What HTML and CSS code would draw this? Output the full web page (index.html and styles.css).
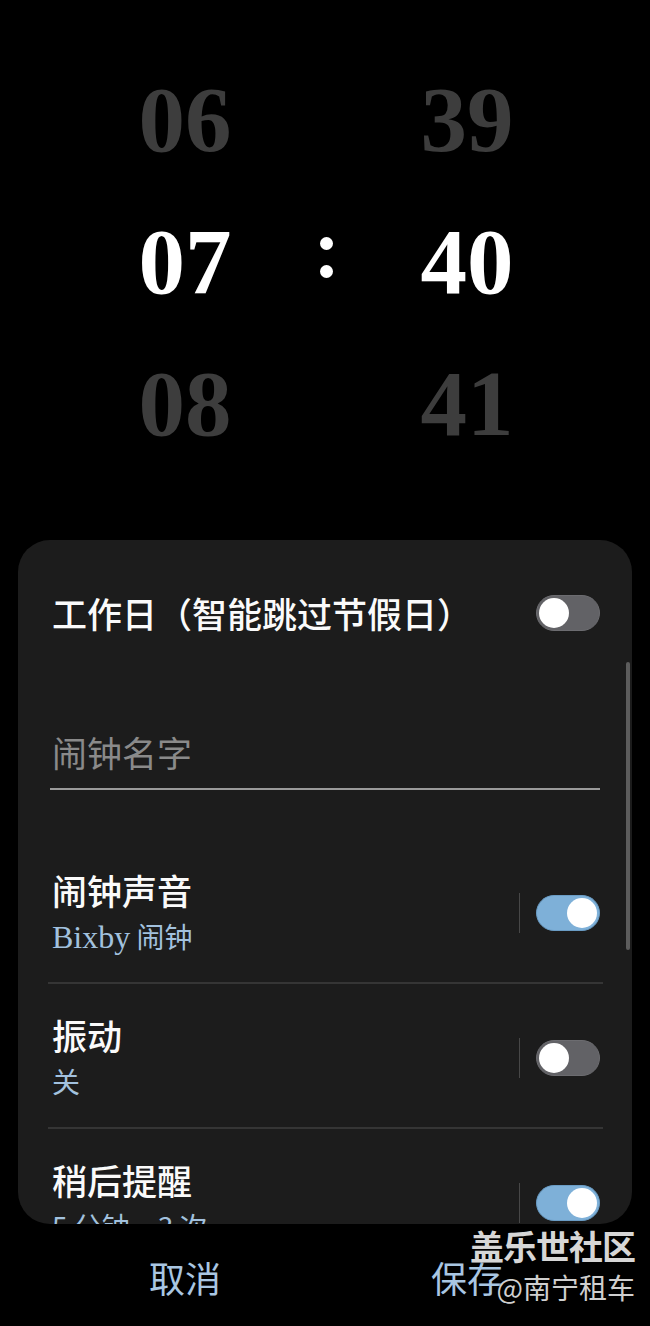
FILE: index.html
```html
<!DOCTYPE html>
<html lang="zh-CN">
<head>
<meta charset="utf-8">
<title>闹钟</title>
<link rel="stylesheet" href="styles.css">
</head>
<body>
<main class="screen">
  <section class="picker">
    <div class="picker-col">
      <div class="num dim">06</div>
      <div class="num">07</div>
      <div class="num dim">08</div>
    </div>
    <div class="picker-sep" aria-label=":">
      <span class="dot"></span>
      <span class="dot"></span>
    </div>
    <div class="picker-col">
      <div class="num dim">39</div>
      <div class="num">40</div>
      <div class="num dim">41</div>
    </div>
  </section>

  <section class="sheet">
    <div class="scrollbar"></div>

    <div class="workday">
      <span class="title">工作日（智能跳过节假日）</span>
      <span class="toggle"><span class="knob"></span></span>
    </div>

    <div class="name-field">闹钟名字</div>

    <div class="list">
      <div class="item">
        <div class="item-text">
          <div class="title">闹钟声音</div>
          <div class="sub"><span class="latin">Bixby</span> 闹钟</div>
        </div>
        <span class="vline"></span>
        <span class="toggle on"><span class="knob"></span></span>
      </div>
      <div class="item">
        <div class="item-text">
          <div class="title">振动</div>
          <div class="sub">关</div>
        </div>
        <span class="vline"></span>
        <span class="toggle"><span class="knob"></span></span>
      </div>
      <div class="item">
        <div class="item-text">
          <div class="title">稍后提醒</div>
          <div class="sub">5 分钟，3 次</div>
        </div>
        <span class="vline"></span>
        <span class="toggle on"><span class="knob"></span></span>
      </div>
    </div>
  </section>

  <footer class="actions">
    <span class="action">取消</span>
    <span class="action">保存</span>
  </footer>

  <div class="watermark">
    <span class="wm-main">盖乐世社区</span>
    <span class="wm-sub">@南宁租车</span>
  </div>
</main>
</body>
</html>
```

FILE: styles.css
```css
html, body {
  margin: 0;
  padding: 0;
  background: #000;
}

.screen {
  position: relative;
  width: 650px;
  height: 1326px;
  overflow: hidden;
  background: #000;
  font-family: "Noto Sans CJK SC", sans-serif;
}

/* ---------- time picker ---------- */
.picker {
  display: flex;
  padding: 49px 0 0 100px;
  height: 426px;
}

.picker-col {
  width: 170px;
  display: flex;
  flex-direction: column;
}

.num {
  height: 142px;
  line-height: 142px;
  text-align: center;
  font-family: "Liberation Serif", serif;
  font-weight: 700;
  font-size: 93px;
  color: #ffffff;
}

.num.dim {
  color: #3d3d3d;
}

.picker-sep {
  width: 112px;
  display: flex;
  flex-direction: column;
  align-items: center;
  justify-content: center;
  gap: 15px;
  padding-bottom: 9px;
  box-sizing: border-box;
  height: 142px;
  margin-top: 142px;
}

.dot {
  width: 13px;
  height: 13px;
  border-radius: 50%;
  background: #ffffff;
}

/* ---------- bottom sheet ---------- */
.sheet {
  position: relative;
  margin: 65px 18px 0;
  height: 684px;
  background: #1c1c1c;
  border-radius: 32px;
  overflow: hidden;
}

.scrollbar {
  position: absolute;
  top: 122px;
  right: 2px;
  width: 4px;
  height: 288px;
  border-radius: 2px;
  background: #5c5c5c;
}

.title {
  font-size: 35px;
  line-height: 46px;
  height: 46px;
  font-weight: 500;
  color: #fafafa;
  white-space: nowrap;
}

.workday {
  margin-top: 35px;
  height: 75px;
  padding: 0 32px 0 34px;
  display: flex;
  align-items: center;
  justify-content: space-between;
}

.name-field {
  margin: 77px 32px 0;
  padding: 0 0 11px 2px;
  height: 50px;
  line-height: 50px;
  font-size: 35px;
  color: #8a8a8a;
  border-bottom: 2px solid #9a9a9a;
}

.list {
  margin-top: 49px;
}

.item {
  display: flex;
  align-items: center;
  margin: 0 29px 0 30px;
  padding: 28px 3px 23px 4px;
  border-bottom: 2px solid #353535;
}

.item-text {
  flex: 1;
  display: flex;
  flex-direction: column;
}

.sub {
  font-size: 28px;
  line-height: 46px;
  height: 46px;
  color: #a2c1de;
  white-space: nowrap;
}

.sub .latin {
  font-family: "Liberation Serif", serif;
  font-size: 32px;
}

.vline {
  width: 1px;
  height: 40px;
  background: #474747;
  margin-right: 16px;
}

/* ---------- toggle ---------- */
.toggle {
  position: relative;
  width: 64px;
  height: 36px;
  border-radius: 18px;
  background: #626266;
  box-sizing: border-box;
  border: 1px solid #6c6c70;
  flex: none;
}

.toggle .knob {
  position: absolute;
  top: 2px;
  left: 2px;
  width: 30px;
  height: 30px;
  border-radius: 50%;
  background: #ffffff;
}

.toggle.on {
  background: #7eb0d8;
  border-color: #6a9cc4;
}

.toggle.on .knob {
  left: auto;
  right: 2px;
}

/* ---------- actions ---------- */
.actions {
  display: flex;
  padding: 28px 0 0 100px;
  gap: 112px;
}

.action {
  width: 170px;
  text-align: center;
  font-size: 36px;
  line-height: 50px;
  height: 50px;
  color: #a9c6e2;
}

/* ---------- watermark ---------- */
.watermark {
  position: absolute;
  right: 15px;
  top: 1224px;
  display: flex;
  flex-direction: column;
  align-items: flex-end;
  color: #d6d6d6;
  text-shadow: 0 0 2px rgba(0, 0, 0, 0.6);
}

.wm-main {
  font-size: 34px;
  line-height: 44px;
  font-weight: 700;
  letter-spacing: -1px;
}

.wm-sub {
  font-size: 28px;
  line-height: 38px;
  color: #cfcfcf;
}
```
